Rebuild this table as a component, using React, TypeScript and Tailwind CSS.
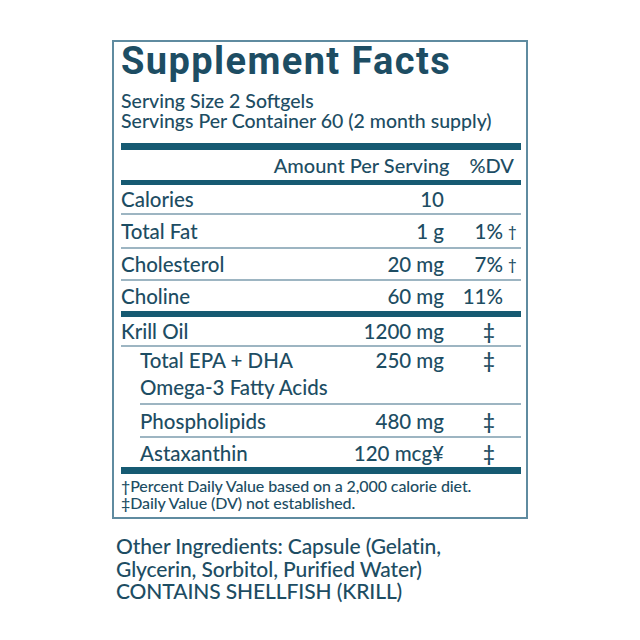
import React from 'react';

type Row = {
  name: string[];
  amount: string;
  pct?: string;
  mark?: 'dagger' | 'ddagger';
  indent?: boolean;
  h: string;
};

const topRows: Row[] = [
  { name: ['Calories'], amount: '10', h: 'h-[28px]' },
  { name: ['Total Fat'], amount: '1 g', pct: '1%', mark: 'dagger', h: 'h-[32px]' },
  { name: ['Cholesterol'], amount: '20 mg', pct: '7%', mark: 'dagger', h: 'h-[30px]' },
  { name: ['Choline'], amount: '60 mg', pct: '11%', h: 'h-[30px]' },
];

const oilRows: Row[] = [
  { name: ['Krill Oil'], amount: '1200 mg', mark: 'ddagger', h: 'h-[28px]' },
  { name: ['Total EPA + DHA', 'Omega-3 Fatty Acids'], amount: '250 mg', mark: 'ddagger', indent: true, h: 'h-[56px]' },
  { name: ['Phospholipids'], amount: '480 mg', mark: 'ddagger', indent: true, h: 'h-[31px]' },
  { name: ['Astaxanthin'], amount: '120 mcg¥', mark: 'ddagger', indent: true, h: 'h-[29px]' },
];

const DvCell = ({ row }: { row: Row }) => {
  if (row.mark === 'ddagger') {
    return <div className="w-[77px] pl-[13px] text-center font-semibold">‡</div>;
  }
  return (
    <div className="w-[77px] flex">
      <div className="w-[59px] text-right">{row.pct}</div>
      <div className="w-[18px] pl-[5px] text-[15px]">{row.mark === 'dagger' ? '†' : ''}</div>
    </div>
  );
};

const FactRow = ({ row }: { row: Row }) => {
  const multi = row.name.length > 1;
  const lh = multi ? 'leading-[27px]' : 'leading-[24px]';
  return (
    <div className={`flex ${row.h} ${multi ? 'items-start' : 'items-center'} ${row.indent ? 'pl-[19px]' : ''}`}>
      <div className="flex-1 flex flex-col">
        {row.name.map((n) => (
          <span key={n} className={lh}>{n}</span>
        ))}
      </div>
      <div className={`text-right ${lh}`}>{row.amount}</div>
      <div className={lh}>
        <DvCell row={row} />
      </div>
    </div>
  );
};

const ThinLine = ({ indent }: { indent?: boolean }) => (
  <div className={`h-[2px] bg-[#9db5c2] ${indent ? 'ml-[19px]' : ''}`} />
);

export default function App() {
  return (
    <div
      className="min-h-screen bg-white pt-[40px] text-[#1d4d63] font-medium"
      style={{ fontFamily: 'Lato, "Open Sans", sans-serif' }}
    >
      <div className="w-[416px] mx-auto border-2 border-[#5f8ba0] pl-[7px] pr-[5px]">
        <h1
          className="text-[38px] leading-[38px] font-bold tracking-[1.4px]"
          style={{ fontFamily: 'Roboto, "Liberation Sans", sans-serif' }}
        >
          Supplement Facts
        </h1>
        <div className="mt-[11px] text-[19.5px] leading-[20px]">
          <p>Serving Size 2 Softgels</p>
          <p>Servings Per Container 60 (2 month supply)</p>
        </div>

        <div className="mt-[12px] h-[7px] bg-[#165a72]" />
        <div className="flex h-[30px] items-center justify-end text-[20px]">
          <span className="mr-[20px]">Amount Per Serving</span>
          <span className="pr-[7px]">%DV</span>
        </div>
        <div className="h-[5px] bg-[#165a72]" />

        <div className="text-[20.5px]">
          {topRows.map((r, i) => (
            <React.Fragment key={r.name[0]}>
              <FactRow row={r} />
              {i < topRows.length - 1 && <ThinLine />}
            </React.Fragment>
          ))}
          <div className="h-[6px] bg-[#165a72]" />
          {oilRows.map((r, i) => (
            <React.Fragment key={r.name[0]}>
              <FactRow row={r} />
              {i < oilRows.length - 1 && <ThinLine indent={i > 0} />}
            </React.Fragment>
          ))}
        </div>
        <div className="h-[7px] bg-[#165a72]" />

        <div className="pt-[3px] pb-[6px] text-[16px] leading-[17px] tracking-[-0.1px]">
          <p>†Percent Daily Value based on a 2,000 calorie diet.</p>
          <p>‡Daily Value (DV) not established.</p>
        </div>
      </div>

      <div className="w-[416px] mx-auto mt-[16px] pl-[4px] text-[21px] leading-[22.5px] tracking-[-0.1px]">
        <p>Other Ingredients: Capsule (Gelatin,</p>
        <p>Glycerin, Sorbitol, Purified Water)</p>
        <p>CONTAINS SHELLFISH (KRILL)</p>
      </div>
    </div>
  );
}
